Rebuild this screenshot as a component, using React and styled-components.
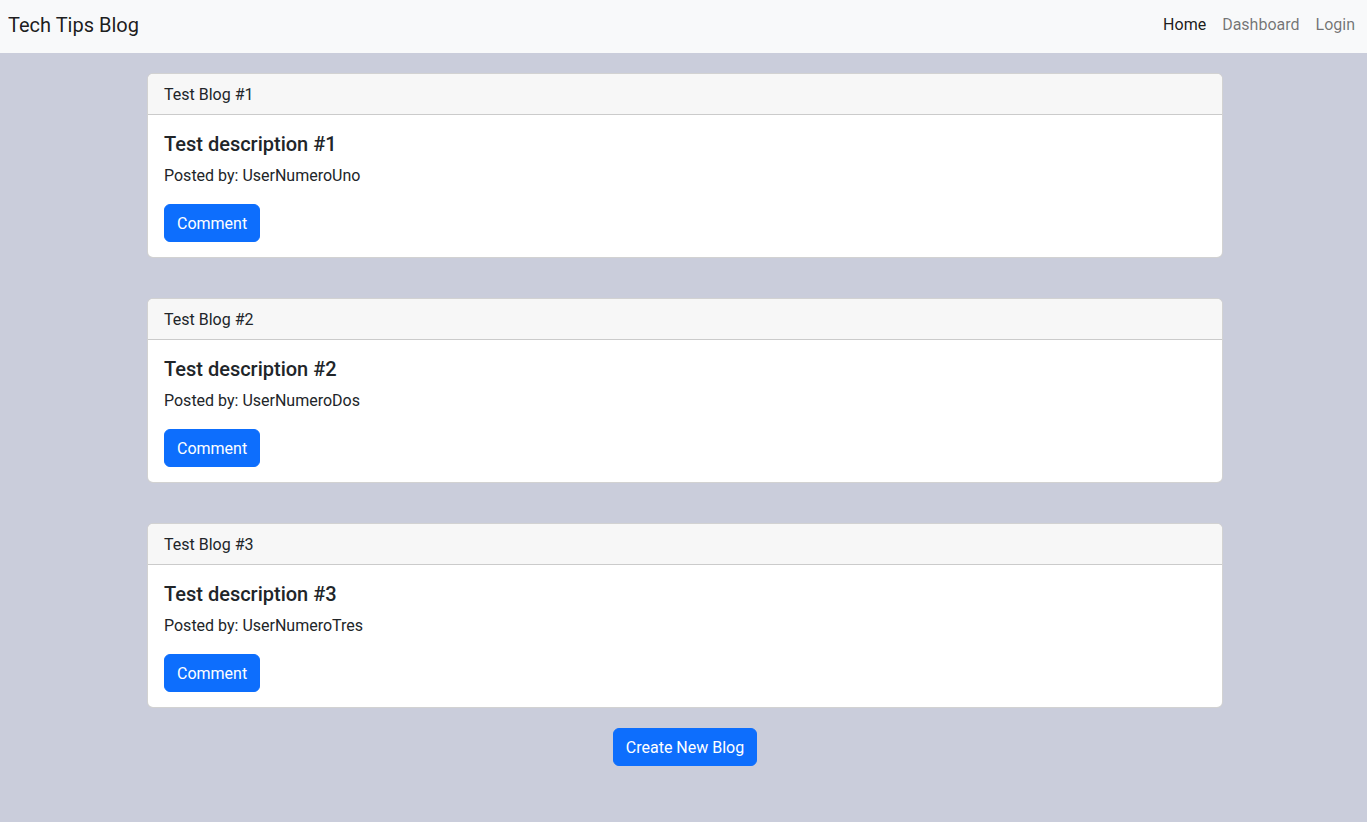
import { styled, createGlobalStyle } from "styled-components";

const GlobalStyle = createGlobalStyle`
    * { box-sizing: border-box; }
    body {
        margin: 0;
        background-color: #cacddb;
        font-family: Roboto, "Liberation Sans", sans-serif;
        color: #212529;
        font-size: 16px;
        line-height: 1.5;
    }
`;

const blogs = [
    { title: "Test Blog #1", description: "Test description #1", author: "UserNumeroUno" },
    { title: "Test Blog #2", description: "Test description #2", author: "UserNumeroDos" },
    { title: "Test Blog #3", description: "Test description #3", author: "UserNumeroTres" },
];

export default function App() {
    return (
        <>
            <GlobalStyle />
            <Navbar>
                <Brand>Tech Tips Blog</Brand>
                <NavLinks>
                    <NavLink $active>Home</NavLink>
                    <NavLink>Dashboard</NavLink>
                    <NavLink>Login</NavLink>
                </NavLinks>
            </Navbar>
            <Main>
                {blogs.map((blog) => (
                    <Card key={blog.title}>
                        <CardHeader>{blog.title}</CardHeader>
                        <CardBody>
                            <CardTitle>{blog.description}</CardTitle>
                            <CardText>Posted by: {blog.author}</CardText>
                            <Button>Comment</Button>
                        </CardBody>
                    </Card>
                ))}
                <CreateRow>
                    <Button>Create New Blog</Button>
                </CreateRow>
            </Main>
        </>
    );
}

const Navbar = styled.nav`
    height: 53px;
    background-color: #f8f9fa;
    display: flex;
    align-items: center;
    justify-content: space-between;
    padding: 0 4px 3px 8px;
`;

const Brand = styled.span`
    font-size: 20px;
    line-height: 30px;
    color: rgba(0, 0, 0, 0.9);
`;

const NavLinks = styled.div`
    display: flex;
`;

const NavLink = styled.span`
    padding: 8px;
    color: ${(p) => (p.$active ? "rgba(0, 0, 0, 0.9)" : "rgba(0, 0, 0, 0.55)")};
`;

const Main = styled.main`
    display: flex;
    flex-direction: column;
    gap: 40px;
    padding: 20px 144px 40px 147px;
`;

const Card = styled.div`
    background-color: #fff;
    border: 1px solid rgba(0, 0, 0, 0.175);
    border-radius: 6px;
    overflow: hidden;
`;

const CardHeader = styled.div`
    padding: 9px 16px 7px;
    background-color: #f7f7f7;
    border-bottom: 1px solid rgba(0, 0, 0, 0.175);
`;

const CardBody = styled.div`
    padding: 17px 16px 15px;
`;

const CardTitle = styled.h5`
    margin: 0 0 8px;
    font-size: 20px;
    font-weight: 500;
    line-height: 1.2;
`;

const CardText = styled.p`
    margin: 0 0 16px;
`;

const Button = styled.button`
    font-family: inherit;
    font-size: 16px;
    line-height: 1.5;
    padding: 7px 12px 5px;
    border: 1px solid #0d6efd;
    border-radius: 6px;
    background-color: #0d6efd;
    color: #fff;
`;

const CreateRow = styled.div`
    display: flex;
    justify-content: center;
    margin-top: -20px;
`;
